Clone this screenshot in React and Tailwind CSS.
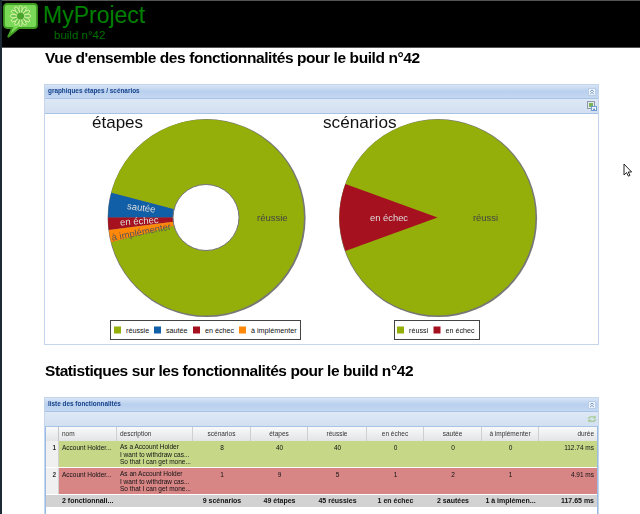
const sans = "font-['Liberation_Sans',Arial,sans-serif]";

function pt(cx, cy, r, deg) {
  const a = (deg * Math.PI) / 180;
  return [cx + r * Math.cos(a), cy + r * Math.sin(a)];
}
function slice(cx, cy, r, r0, from, to) {
  const large = Math.abs(to - from) > 180 ? 1 : 0;
  const [x1, y1] = pt(cx, cy, r, from);
  const [x2, y2] = pt(cx, cy, r, to);
  if (r0 === 0) return `M${cx} ${cy}L${x1} ${y1}A${r} ${r} 0 ${large} 1 ${x2} ${y2}Z`;
  const [x3, y3] = pt(cx, cy, r0, to);
  const [x4, y4] = pt(cx, cy, r0, from);
  return `M${x1} ${y1}A${r} ${r} 0 ${large} 1 ${x2} ${y2}L${x3} ${y3}A${r0} ${r0} 0 ${large} 0 ${x4} ${y4}Z`;
}

const GREEN = "#94ae0a";
const BLUE = "#115fa6";
const RED = "#a61120";
const ORANGE = "#ff8809";

function Legend({ x, y, w, items }) {
  return (
    <g>
      <rect x={x} y={y} width={w} height={19} fill="#fff" stroke="#444" strokeWidth="1" />
      {items.map((it) => (
        <g key={it.label}>
          <rect x={it.x} y={y + 6} width={7} height={7} fill={it.color} />
          <text x={it.x + 12} y={y + 12} fontSize="7.2" fill="#111">{it.label}</text>
        </g>
      ))}
    </g>
  );
}

function ChartA() {
  const cx = 161, cy = 103.5, r = 98, r0 = 33;
  return (
    <svg width="276" height="230" className="block shrink-0 overflow-visible" fontFamily="Liberation Sans, Arial, sans-serif">
      <text x="47" y="14" fontSize="17" fill="#111">étapes</text>
      <circle cx={cx + 0.6} cy={cy + 0.6} r={r + 1} fill="#777" />
      <path d={slice(cx, cy, r, r0, 194.7, 525.3)} fill={GREEN} />
      <path d={slice(cx, cy, r, r0, 180, 194.7)} fill={BLUE} />
      <path d={slice(cx, cy, r, r0, 172.65, 180)} fill={RED} />
      <path d={slice(cx, cy, r, r0, 165.3, 172.65)} fill={ORANGE} />
      <circle cx={cx} cy={cy} r={r0} fill="#fff" stroke="#777" strokeWidth="1" />
      <text x="212" y="106.5" fontSize="9.5" fill="#444">réussie</text>
      <text x="82" y="97" fontSize="9.5" fill="#ddd" transform="rotate(7.3 97 94)">sautée</text>
      <text x="75" y="110" fontSize="9.5" fill="#ddd" transform="rotate(-3.6 97 107)">en échec</text>
      <text x="66" y="121" fontSize="9.5" fill="#555" transform="rotate(-11 97 117)">à implémenter</text>
      <Legend x={65.5} y={206.5} w={190} items={[
        { label: "réussie", color: GREEN, x: 69 },
        { label: "sautée", color: BLUE, x: 109 },
        { label: "en échec", color: RED, x: 148 },
        { label: "à implémenter", color: ORANGE, x: 194 },
      ]} />
    </svg>
  );
}

function ChartB() {
  const cx = 116.5, cy = 103.5, r = 98;
  return (
    <svg width="277" height="230" className="block shrink-0 overflow-visible" fontFamily="Liberation Sans, Arial, sans-serif">
      <text x="2" y="14" fontSize="17.2" fill="#111">scénarios</text>
      <circle cx={cx + 0.6} cy={cy + 0.6} r={r + 1} fill="#777" />
      <circle cx={cx} cy={cy} r={r} fill={GREEN} />
      <path d={slice(cx, cy, r, 0, 160, 200)} fill={RED} />
      <text x="49" y="106.5" fontSize="9.4" fill="#ddd">en échec</text>
      <text x="152" y="106.5" fontSize="9.4" fill="#444">réussi</text>
      <Legend x={73.5} y={206.5} w={85} items={[
        { label: "réussi", color: GREEN, x: 76 },
        { label: "en échec", color: RED, x: 112.5 },
      ]} />
    </svg>
  );
}

function CollapseBtn() {
  return (
    <svg width="8" height="8" viewBox="0 0 8 8" className="block">
      <rect x="0.5" y="0.5" width="7" height="7" fill="#eef4fb" stroke="#b9cde8" />
      <path d="M2.2 3.6 4 2 5.8 3.6M2.2 6 4 4.4 5.8 6" fill="none" stroke="#6288bb" strokeWidth="0.9" />
    </svg>
  );
}

function SaveIcon() {
  return (
    <svg width="10" height="10" viewBox="0 0 10 10" className="block">
      <rect x="0.5" y="0.5" width="7" height="7" fill="#e4e9f0" stroke="#8f98a5" />
      <rect x="2" y="2" width="4" height="4" fill="#7bb356" />
      <rect x="4.5" y="5.5" width="5" height="4" fill="#f4f7fb" stroke="#6f9ccf" />
      <rect x="6" y="7.5" width="2" height="2" fill="#6f9ccf" />
    </svg>
  );
}

function RefreshIcon() {
  return (
    <svg width="10" height="8" viewBox="0 0 10 8" className="block">
      <path d="M0.5 3.6C1.4 1.2 5 .2 7.4 1.6L8.8 .4V3.6H5.6L6.6 2.7C5.2 2 3.4 2.2 2.6 3.6Z" fill="#a5cc96" />
      <path d="M9.5 4.4C8.6 6.8 5 7.8 2.6 6.4L1.2 7.6V4.4H4.4L3.4 5.3C4.8 6 6.6 5.8 7.4 4.4Z" fill="#a5cc96" />
    </svg>
  );
}

function Panel({ title, icon, className = "", children }) {
  return (
    <div className={`ml-[44px] w-[555px] border border-[#c5d6ec] border-b-0 ${className}`}>
      <div className="h-[14px] flex items-center justify-between pl-[3px] pr-[2px] border-b border-[#a9c3e6] bg-gradient-to-b from-[#d8e5f6] via-[#b9d0ee] to-[#c5d8f1]">
        <span className="text-[6.4px] font-bold text-[#15428b] leading-none">{title}</span>
        <CollapseBtn />
      </div>
      <div className="h-[15px] flex items-center justify-end pr-[1px] border-b border-[#a9c3e6] bg-gradient-to-b from-[#dee8f6] to-[#d3e0f1]">
        {icon}
      </div>
      {children}
    </div>
  );
}

const cols = [
  { w: 58, label: "nom", align: "text-left" },
  { w: 76, label: "description", align: "text-left" },
  { w: 58, label: "scénarios" },
  { w: 57, label: "étapes" },
  { w: 59, label: "réussie" },
  { w: 57, label: "en échec" },
  { w: 58, label: "sautée" },
  { w: 57, label: "à implémenter" },
  { w: 58, label: "durée", align: "text-right" },
];

const rows = [
  { n: 1, bg: "bg-[#c6d888]", nom: "Account Holder...", d: ["As a Account Holder", "I want to withdraw cas...", "So that I can get mone..."], v: ["8", "40", "40", "0", "0", "0", "112.74 ms"] },
  { n: 2, bg: "bg-[#d78585]", nom: "Account Holder...", d: ["As an Account Holder", "I want to withdraw cas...", "So that I can get mone..."], v: ["1", "9", "5", "1", "2", "1", "4.91 ms"] },
];
const summary = ["9 scénarios", "49 étapes", "45 réussies", "1 en échec", "2 sautées", "1 à implémen...", "117.65 ms"];

function Table() {
  return (
    <div className="border-l border-r border-[#99bbe8] text-[6.5px] text-[#111] h-[87px]">
      <div className="flex h-[14px] bg-gradient-to-b from-[#f9f9f9] to-[#e3e4e6] text-[#333]">
        <div className="w-[13px] shrink-0 border-r border-[#c5c5c5]" />
        {cols.map((c) => (
          <div key={c.label} style={{ width: c.w }} className={`shrink-0 px-[3px] flex items-center border-r border-[#cfcfcf] last:border-r-0 ${c.align === "text-left" ? "justify-start" : c.align === "text-right" ? "justify-end" : "justify-center"}`}>{c.label}</div>
        ))}
      </div>
      {rows.map((r) => (
        <div key={r.n} className={`flex h-[26px] mb-[1px] ${r.bg}`}>
          <div className="w-[13px] shrink-0 bg-[#f0f0f0] text-right pr-[2px] pt-[2px] border-r border-[#d0d0d0] font-bold text-[#333]">{r.n}</div>
          <div className="w-[58px] shrink-0 pl-[3px] pt-[2px]">{r.nom}</div>
          <div className="w-[76px] shrink-0 pl-[3px] pt-[2px] leading-[7.5px]">
            {r.d.map((t) => <div key={t}>{t}</div>)}
          </div>
          {r.v.map((t, i) => (
            <div key={i} style={{ width: cols[i + 2].w }} className={`shrink-0 px-[3px] pt-[2px] ${i === 6 ? "text-right" : "text-center"}`}>{t}</div>
          ))}
        </div>
      ))}
      <div className="flex h-[12px] bg-[#d2d2d2] font-bold items-center text-[7px]">
        <div className="w-[13px] shrink-0" />
        <div className="w-[58px] shrink-0 pl-[3px] whitespace-nowrap">2 fonctionnali...</div>
        <div className="w-[76px] shrink-0" />
        {summary.map((t, i) => (
          <div key={i} style={{ width: cols[i + 2].w }} className={`shrink-0 px-[3px] whitespace-nowrap ${i === 6 ? "text-right" : "text-center"}`}>{t}</div>
        ))}
      </div>
    </div>
  );
}

function Logo() {
  return (
    <svg width="36" height="36" viewBox="0 0 36 36" className="block shrink-0">
      <path d="M5 2H32A3 3 0 0 1 35 5V23A3 3 0 0 1 32 26H17L6 35L10 26H5A3 3 0 0 1 2 23V5A3 3 0 0 1 5 2Z" fill="#79d957" stroke="#3f9a22" strokeWidth="1.8" />
      {[0, 30, 60, 90, 120, 150, 180, 210, 240, 270, 300, 330].map((a) => (
        <ellipse key={a} cx="18.5" cy="7.2" rx="1.6" ry="3.7" fill="#6fc84f" stroke="#e3f7b0" strokeWidth="0.8" transform={`rotate(${a} 18.5 14)`} />
      ))}
      <circle cx="18.5" cy="14" r="3.6" fill="#4aa52e" />
    </svg>
  );
}

export default function App() {
  return (
    <div className={`relative w-[640px] h-[514px] overflow-hidden bg-white ${sans}`}>
      <div className="absolute left-0 top-0 bottom-0 w-[2px] bg-[#1c2a33]" />
      <header className="h-[48px] bg-black border-t border-[#555] border-b flex items-start pl-[2px] pt-[1px]">
        <Logo />
        <div className="ml-[5px] flex flex-col">
          <div className="text-[23px] leading-[24px] text-[#008000] mt-[1px]">MyProject</div>
          <div className="text-[11.5px] leading-[12px] text-[#006e00] ml-[11px] mt-[2px]">build n°42</div>
        </div>
      </header>
      <div className="blur-[0.3px]">
        <h1 className="ml-[45px] mt-[1px] text-[15.5px] leading-[18px] font-bold text-black tracking-[-0.42px]">Vue d'ensemble des fonctionnalités pour le build n°42</h1>
        <Panel title="graphiques étapes / scénarios" icon={<SaveIcon />} className="mt-[17px] border-b!">
          <div className="flex h-[230px] bg-white">
            <ChartA />
            <ChartB />
          </div>
        </Panel>
        <h1 className="ml-[45px] mt-[17px] text-[15.5px] leading-[18px] font-bold text-black tracking-[-0.42px]">Statistiques sur les fonctionnalités pour le build n°42</h1>
        <Panel title="liste des fonctionnalités" icon={<RefreshIcon />} className="mt-[17px]">
          <Table />
        </Panel>
      </div>
      <svg width="10" height="14" viewBox="0 0 10 14" className="absolute left-[623px] top-[163px]">
        <path d="M1 1V12L3.6 9.6 5.4 13.2 7 12.4 5.2 9H8.6Z" fill="#fff" stroke="#222" strokeWidth="1" />
      </svg>
    </div>
  );
}
